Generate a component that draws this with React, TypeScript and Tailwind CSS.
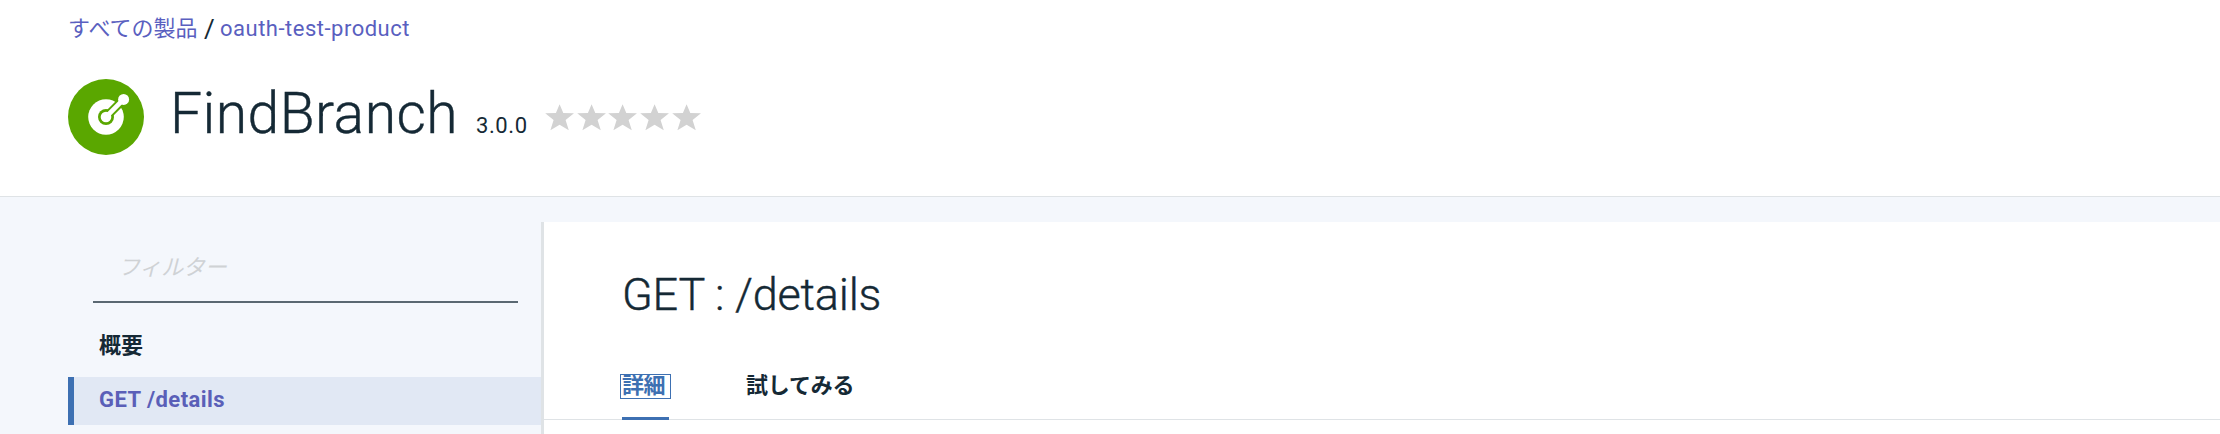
const STAR = 'M14.6 0.3 18.3 9.1 29 9.3 20.6 15.9 23.8 26.3 14.6 20.8 5.4 26.3 8.6 15.9 0.2 9.3 10.9 9.1Z';

function ApiIcon() {
  return (
    <svg className="h-[76px] w-[76px] shrink-0" viewBox="0 0 76 76">
      <circle cx="38" cy="38" r="38" fill="#5aa700" />
      <circle cx="38" cy="38" r="17.8" fill="#fff" />
      <path d="M38 38 60 16" stroke="#5aa700" strokeWidth="8.6" />
      <circle cx="38" cy="38" r="8" fill="#5aa700" />
      <path d="M38 38 55.8 20.2" stroke="#fff" strokeWidth="4.6" />
      <circle cx="38" cy="38" r="5.3" fill="#fff" />
      <circle cx="55.6" cy="20.4" r="5.5" fill="#fff" />
    </svg>
  );
}

function Header() {
  return (
    <header className="h-[197px] border-b border-[#dfe3e6] bg-white pl-[68px]">
      <nav className="flex h-14 items-center pt-0.5 text-[22px] leading-[54px] whitespace-nowrap text-[#5a5fc0]">
        <a className="w-[136px]">すべての製品</a>
        <span className="w-[16px] text-[26px] text-[#152935]">/</span>
        <a className="tracking-[0.5px]">oauth-test-product</a>
      </nav>
      <div className="flex pt-[23px] whitespace-nowrap">
        <ApiIcon />
        <h1 className="ml-[26px] w-[306px] pt-px text-[57px] leading-[68px] font-light tracking-[0.45px] [-webkit-text-stroke:0.4px]">FindBranch</h1>
        <span className="w-[69px] pt-[31px] text-[22px] leading-[32px] tracking-[0.6px]">3.0.0</span>
        <div className="flex pt-[25px]">
          {[1, 2, 3, 4, 5].map((n) => (
            <svg key={n} className="h-[27px] w-[31.7px]" viewBox="0 0 31.7 27">
              <path d={STAR} fill="#d2d2d2" />
            </svg>
          ))}
        </div>
      </div>
    </header>
  );
}

function Sidebar() {
  return (
    <aside className="w-[544px] shrink-0 border-r-[3px] border-[#dfe3e6] pl-[68px] whitespace-nowrap">
      <div className="ml-[25px] h-[81px] w-[425px] border-b-2 border-[#5a6872] pt-[30px] pl-[25px] text-[22px] leading-[32px] tracking-[-0.2px] text-[#cfd2d5] italic">
        フィルター
      </div>
      <div className="mt-[22px] h-[52px] pl-[31px] text-[22px] leading-[42px] font-bold">概要</div>
      <div className="h-12 border-l-[6px] border-[#3d70b2] bg-[#e1e8f4] pl-[25px] text-[22px] leading-[46px] font-bold tracking-[0.45px] text-[#5a5fb8]">
        GET /details
      </div>
    </aside>
  );
}

function Details() {
  return (
    <main className="grow bg-white whitespace-nowrap">
      <h2 className="pt-[46px] pl-[78px] text-[45px] leading-[54px] font-light tracking-[-0.2px] [-webkit-text-stroke:0.4px]">GET : /details</h2>
      <div className="mt-[42px] flex h-[56px] border-b border-[#dfe3e6] pl-[78px] text-[22px] leading-[43px] font-bold">
        <div className="-mb-px h-[56px] w-[47px] border-b-[3px] border-[#3d70b2] pt-[11px] text-[#3d70b2]">
          <a className="-ml-px block h-[23px] w-[49px] pl-px leading-[21px] tracking-[-0.4px] outline-1 outline-[#3d70b2]">詳細</a>
        </div>
        <a className="ml-[77px] tracking-[-0.2px]">試してみる</a>
      </div>
    </main>
  );
}

export default function App() {
  return (
    <div className="flex h-[434px] w-[2220px] flex-col overflow-hidden bg-[#f4f7fc] font-[Roboto,'Noto_Sans_CJK_JP',sans-serif] text-[#152935]">
      <Header />
      <div className="flex grow pt-[25px]">
        <Sidebar />
        <Details />
      </div>
    </div>
  );
}
